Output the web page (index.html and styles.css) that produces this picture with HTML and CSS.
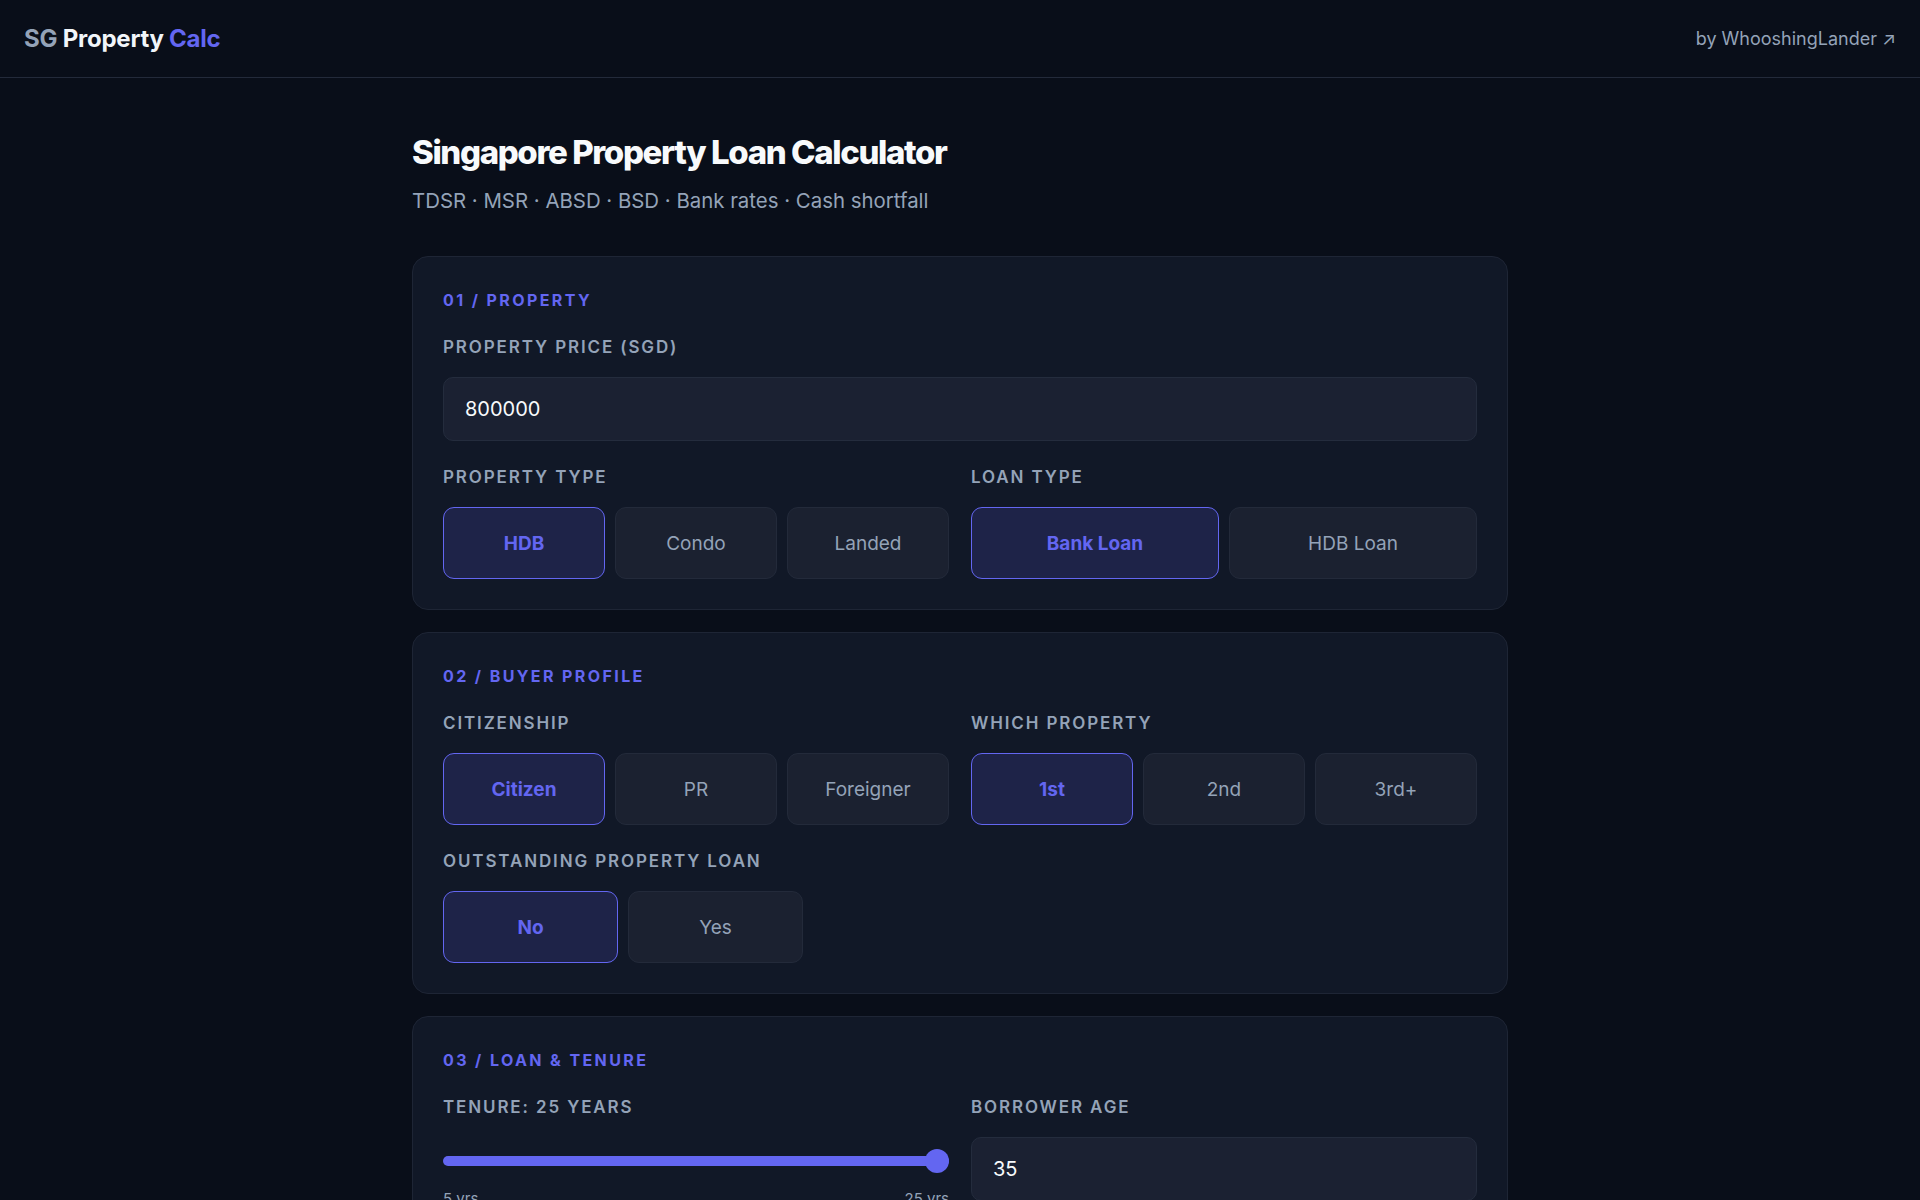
FILE: index.html
```html
<!DOCTYPE html>
<html>
  <head>
    <meta charset="utf-8" />
    <title>SG Property Calc</title>
    <link rel="stylesheet" href="styles.css">
  </head>
  <body>
    <header class="topbar">
      <div class="logo">
        <span class="logo-sg">SG</span> Property <span class="logo-calc">Calc</span>
      </div>
      <a class="byline" href="#">by WhooshingLander ↗</a>
    </header>

    <main class="container">
      <h1 class="title">Singapore Property Loan Calculator</h1>
      <p class="subtitle">TDSR · MSR · ABSD · BSD · Bank rates · Cash shortfall</p>

      <section class="card">
        <div class="card-label">01 / Property</div>
        <div class="field">
          <label class="field-label" for="priceInput">Property Price (SGD)</label>
          <input id="priceInput" class="text-input" type="text" value="800000" />
        </div>
        <div class="row">
          <div class="field">
            <div class="field-label">Property Type</div>
            <div class="toggle-group">
              <button class="toggle active">HDB</button>
              <button class="toggle">Condo</button>
              <button class="toggle">Landed</button>
            </div>
          </div>
          <div class="field">
            <div class="field-label">Loan Type</div>
            <div class="toggle-group">
              <button class="toggle active">Bank Loan</button>
              <button class="toggle">HDB Loan</button>
            </div>
          </div>
        </div>
      </section>

      <section class="card">
        <div class="card-label">02 / Buyer Profile</div>
        <div class="row">
          <div class="field">
            <div class="field-label">Citizenship</div>
            <div class="toggle-group">
              <button class="toggle active">Citizen</button>
              <button class="toggle">PR</button>
              <button class="toggle">Foreigner</button>
            </div>
          </div>
          <div class="field">
            <div class="field-label">Which Property</div>
            <div class="toggle-group">
              <button class="toggle active">1st</button>
              <button class="toggle">2nd</button>
              <button class="toggle">3rd+</button>
            </div>
          </div>
        </div>
        <div class="field">
          <div class="field-label">Outstanding Property Loan</div>
          <div class="toggle-group narrow">
            <button class="toggle active">No</button>
            <button class="toggle">Yes</button>
          </div>
        </div>
      </section>

      <section class="card">
        <div class="card-label">03 / Loan &amp; Tenure</div>
        <div class="row">
          <div class="field">
            <div class="field-label">Tenure: 25 years</div>
            <div class="slider-wrap">
              <input class="range" type="range" min="5" max="25" value="25" />
              <div class="range-labels">
                <span>5 yrs</span>
                <span>25 yrs</span>
              </div>
            </div>
          </div>
          <div class="field">
            <label class="field-label" for="ageInput">Borrower Age</label>
            <input id="ageInput" class="text-input" type="text" value="35" />
          </div>
        </div>
      </section>
    </main>
  </body>
</html>
```

FILE: styles.css
```css
* {
  box-sizing: border-box;
}

body {
  margin: 0;
  background-color: #090e19;
  color: #e2e8f0;
  font-family: Inter, 'Noto Sans', sans-serif;
}

.topbar {
  height: 78px;
  display: flex;
  align-items: center;
  justify-content: space-between;
  padding: 0 24px;
  border-bottom: 1px solid #232a3a;
}

.logo {
  font-size: 24px;
  font-weight: 700;
  color: #f1f5f9;
  letter-spacing: -0.01em;
}

.logo-sg {
  color: #94a3b8;
}

.logo-calc {
  color: #6366f1;
}

.byline {
  font-size: 18px;
  color: #94a3b8;
  text-decoration: none;
}

.container {
  width: 1096px;
  margin: 0 auto;
  padding-top: 54px;
}

.title {
  margin: 0;
  font-size: 33px;
  line-height: 40px;
  font-weight: 800;
  letter-spacing: -0.042em;
  color: #f8fafc;
}

.subtitle {
  margin: 15px 0 41px;
  font-size: 20.4px;
  line-height: 28px;
  color: #94a3b8;
}

.card {
  display: flex;
  flex-direction: column;
  gap: 25px;
  background-color: #111827;
  border: 1px solid #1e2535;
  border-radius: 16px;
  padding: 32px 30px 30px;
  margin-bottom: 22px;
}

.card-label {
  font-size: 16px;
  line-height: 22px;
  font-weight: 700;
  letter-spacing: 0.15em;
  text-transform: uppercase;
  color: #6366f1;
}

.row {
  display: grid;
  grid-template-columns: 1fr 1fr;
  gap: 22px;
}

.field {
  display: flex;
  flex-direction: column;
}

.field-label {
  font-size: 17px;
  line-height: 22px;
  font-weight: 600;
  letter-spacing: 0.11em;
  text-transform: uppercase;
  color: #94a3b8;
  margin-bottom: 19px;
}

.text-input {
  height: 64px;
  width: 100%;
  padding: 0 21px;
  font-family: inherit;
  font-size: 20px;
  color: #f8fafc;
  background-color: #1b2132;
  border: 1px solid #242c3d;
  border-radius: 10px;
  outline: none;
}

.toggle-group {
  display: flex;
  gap: 10px;
}

.toggle-group.narrow {
  width: 360px;
}

.toggle {
  flex: 1;
  height: 72px;
  font-family: inherit;
  font-size: 19px;
  color: #94a3b8;
  background-color: #1b2130;
  border: 1px solid #232a3a;
  border-radius: 11px;
  cursor: pointer;
}

.toggle.active {
  color: #6366f1;
  font-weight: 700;
  background-color: #1e2348;
  border: 1.5px solid #6366f1;
}

.slider-wrap {
  padding-top: 12px;
}

.range {
  -webkit-appearance: none;
  appearance: none;
  display: block;
  width: 100%;
  height: 24px;
  margin: 0;
  background: transparent;
}

.range::-webkit-slider-runnable-track {
  height: 10px;
  border-radius: 5px;
  background: #6366f1;
}

.range::-webkit-slider-thumb {
  -webkit-appearance: none;
  width: 24px;
  height: 24px;
  margin-top: -7px;
  border: none;
  border-radius: 50%;
  background: #6366f1;
}

.range-labels {
  display: flex;
  justify-content: space-between;
  margin-top: 17px;
  font-size: 15px;
  line-height: 18px;
  color: #94a3b8;
}
```
